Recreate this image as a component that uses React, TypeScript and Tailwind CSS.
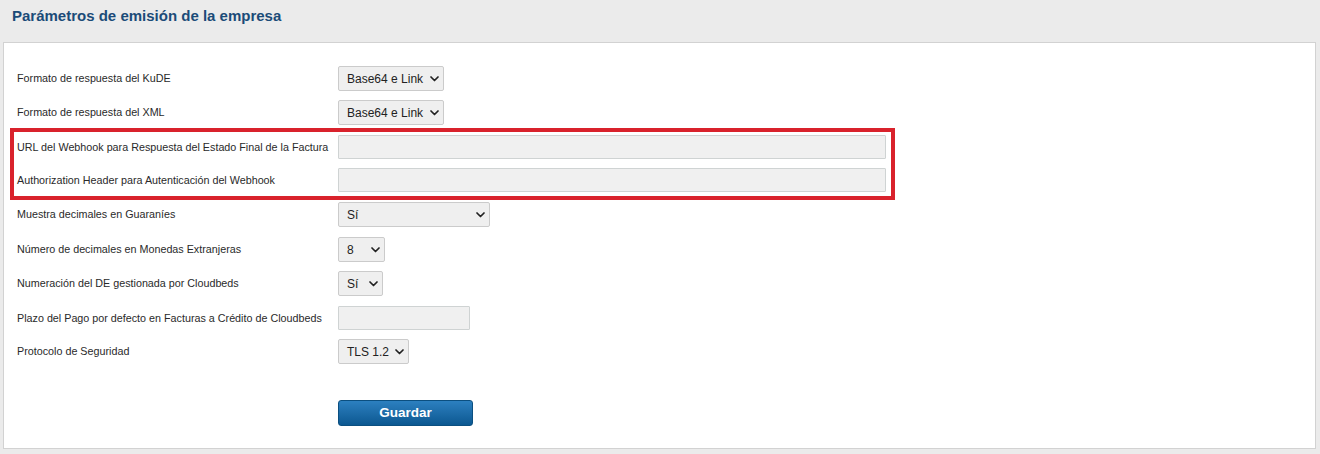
import React from "react";

const Chevron = () => (
  <svg width="9" height="6" viewBox="0 0 9 6" className="shrink-0">
    <path d="M1 1l3.5 3.5L8 1" fill="none" stroke="#222" strokeWidth="1.7" strokeLinecap="round" strokeLinejoin="round" />
  </svg>
);

function Select({ value, w }: { value: string; w: string }) {
  return (
    <div
      className={`flex h-[25px] items-center justify-between rounded-[2px] border border-[#cbcbcb] bg-[#efefef] pl-[8px] pr-[4px] text-[12px] text-[#222] ${w}`}
    >
      <span>{value}</span>
      <Chevron />
    </div>
  );
}

function Input({ w }: { w: string }) {
  return <div className={`h-[24px] rounded-[1px] border border-[#cfd3d3] bg-[#f0f0f0] ${w}`} />;
}

function Label({ children }: { children: React.ReactNode }) {
  return <div className="w-[321px] shrink-0 text-[10.75px] text-[#2a2a2a]">{children}</div>;
}

export default function App() {
  return (
    <div
      className="min-h-screen w-[1320px] bg-[#ebebeb] pb-[5px]"
      style={{ fontFamily: '"Liberation Sans", Arial, sans-serif' }}
    >
      <h1 className="h-[42px] pl-[12px] pt-[7px] text-[15px] font-bold leading-[18px] text-[#1b4b78]">
        Parámetros de emisión de la empresa
      </h1>
      <div className="ml-[3px] mr-[4px] border border-[#d2d2d2] bg-white pb-[22px] pl-[13px] pt-[23px]">
        <div className="flex flex-col">
          <div className="flex h-[25px] items-center">
            <Label>Formato de respuesta del KuDE</Label>
            <Select value="Base64 e Link" w="w-[106px]" />
          </div>
          <div className="mt-[9px] flex h-[25px] items-center">
            <Label>Formato de respuesta del XML</Label>
            <Select value="Base64 e Link" w="w-[106px]" />
          </div>
          <div className="ml-[-7px] mt-[3px] w-[885px] border-[4px] border-[#d9222c] pb-[4px] pl-[3px] pt-[3px]">
            <div className="flex h-[24px] items-center">
              <Label>URL del Webhook para Respuesta del Estado Final de la Factura</Label>
              <Input w="w-[548px]" />
            </div>
            <div className="mt-[9px] flex h-[24px] items-center">
              <Label>Authorization Header para Autenticación del Webhook</Label>
              <Input w="w-[548px]" />
            </div>
          </div>
          <div className="mt-[2px] flex h-[25px] items-center">
            <Label>Muestra decimales en Guaraníes</Label>
            <Select value="Sí" w="w-[152px]" />
          </div>
          <div className="mt-[10px] flex h-[25px] items-center">
            <Label>Número de decimales en Monedas Extranjeras</Label>
            <Select value="8" w="w-[47px]" />
          </div>
          <div className="mt-[9px] flex h-[25px] items-center">
            <Label>Numeración del DE gestionada por Cloudbeds</Label>
            <Select value="Sí" w="w-[45px]" />
          </div>
          <div className="mt-[10px] flex h-[24px] items-center">
            <Label>Plazo del Pago por defecto en Facturas a Crédito de Cloudbeds</Label>
            <Input w="w-[132px]" />
          </div>
          <div className="mt-[9px] flex h-[25px] items-center">
            <Label>Protocolo de Seguridad</Label>
            <Select value="TLS 1.2" w="w-[71px]" />
          </div>
          <div className="mt-[36px] flex">
            <div className="w-[321px] shrink-0" />
            <button className="h-[26px] w-[135px] rounded-[3px] border border-[#0b4f80] bg-linear-to-b from-[#2c80c0] to-[#0b5891] text-[13.5px] font-bold text-white">
              Guardar
            </button>
          </div>
        </div>
      </div>
    </div>
  );
}
